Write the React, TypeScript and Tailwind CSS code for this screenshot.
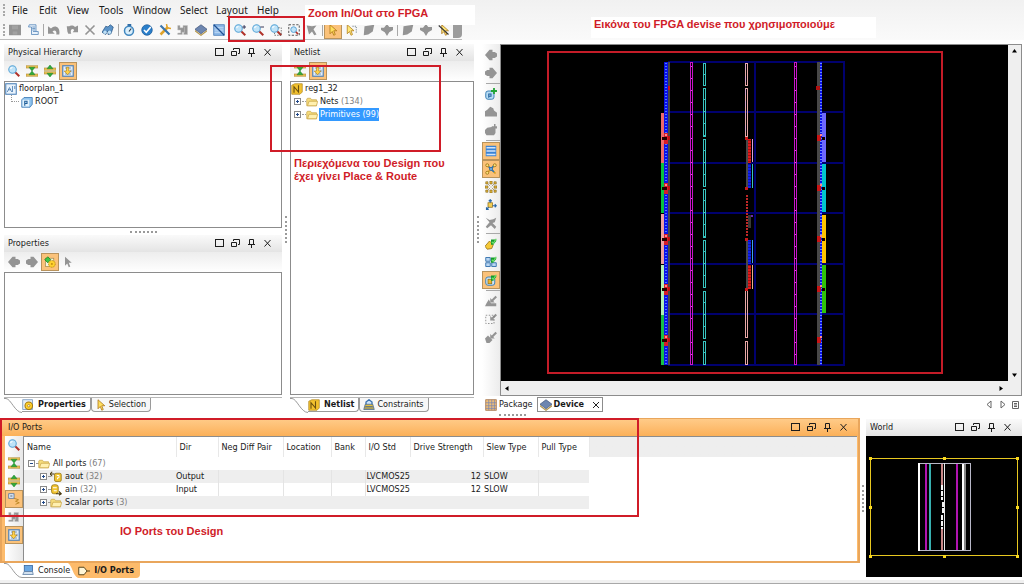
import React from "react";

type IconName =
  | "save" | "script" | "undo" | "redo" | "delete" | "binoculars" | "stopwatch" | "check" | "tools"
  | "schematic" | "chip" | "slash" | "zoom" | "zoomIn" | "zoomOut" | "zoomArea" | "zoomFit" | "unselect"
  | "cursor" | "cursorDots" | "cursorGray" | "leaf" | "diamond" | "crossCursor" | "collapse" | "expand"
  | "pin" | "left" | "right" | "gear" | "pAdd" | "house" | "blobPlus" | "rows" | "network" | "burst"
  | "move" | "swap" | "bell" | "gridCheck" | "cubeCheck" | "grayCheck" | "dashCheck" | "plugCheck"
  | "floorplan" | "cube" | "netlist" | "folder" | "folderOpen" | "cog" | "lock" | "package" | "console"
  | "port" | "portOut" | "portIn" | "treeView";

const G = "#949494";

const lens = (
  <>
    <path d="M9.500 9.500l5.500 5.500" stroke="#b03028" strokeWidth="2.800" />
    <circle cx="6" cy="6" r="5" fill="#bfe3f8" stroke="#5aa5d6" strokeWidth="1.400" />
    <path d="M3.500 5.500a2.500 2.500 0 0 1 2.500-2.200" stroke="#fff" strokeWidth="1.500" fill="none" />
  </>
);
const greenCheck = (
  <>
    <path d="M8 9V2h7v2l-4 5z" fill="#159a2c" />
    <path d="M9 5l2 2 4-6" stroke="#6fe06a" strokeWidth="1.6" fill="none" />
  </>
);
const grayCheck = <path d="M7 4l0 6h6l-2-2 5-5-2-2-5 5z" fill={G} />;
const folderShape = (
  <>
    <path d="M1 13V4l1-1h4l1.500 2H14v8z" fill="#f5dc7c" stroke="#c9a84e" />
    <path d="M2 13l2-6h11.500l-1.500 6z" fill="#fff0b0" stroke="#c9a548" />
  </>
);
const portBody = (
  <>
    <rect x="6" y="3" width="9" height="11" rx="2" fill="#f0c330" stroke="#927012" />
    <path d="M9 6h3v3h-2v2" stroke="#fff" strokeWidth="1.3" fill="none" />
  </>
);

const art: Record<IconName, React.ReactNode> = {
  save: <><path d="M0 1h16v14H0z" fill={G} /><path d="M4 2h8v5H4zM5 10h6v4H5z" fill="#a2a2a2" /></>,
  script: <><path d="M3 1h9v9h3v4H6V4H2z" fill="#e7f1fb" stroke="#4f80b5" /><path d="M7 4h4M7 6h4M7 8h4M8 10h4" stroke="#4f80b5" /></>,
  undo: <path d="M0 3v10h9l-3-3c3-3 6-1 5 4h4C17 4 9 0 4 6z" fill={G} />,
  redo: <path d="M16 2v9H9l2-3c-3-3-6 0-4 5H3C-1 4 7-1 12 4zM1 3h4v8H2z" fill={G} />,
  delete: <path d="M2 2l12 12M14 2L2 14" stroke={G} strokeWidth="2.2" />,
  binoculars: <><path d="M0 11l5-8 3 1 3-3 4 3-3 9-4 1V9l-3 5z" fill="#5b93c8" stroke="#2c5886" /><circle cx="4" cy="11" r="2.200" fill="#bfe0f5" /><circle cx="10" cy="11" r="2.200" fill="#bfe0f5" /></>,
  stopwatch: <><path d="M6 0h5v3H6z" fill="#2f6ba4" /><circle cx="8" cy="9" r="6" fill="#d9eefb" stroke="#3f86bf" strokeWidth="2" /><path d="M8 10l3-4" stroke="#234" strokeWidth="1.4" /></>,
  check: <><circle cx="8" cy="8" r="7" fill="#2a7fcb" stroke="#195a98" /><path d="M4 8l3 3 6-7" stroke="#fff" strokeWidth="2.2" fill="none" /></>,
  tools: <><path d="M2 14L12 4" stroke="#e0a32b" strokeWidth="3.400" /><path d="M2 2l6 6 6 6" stroke="#3b76ae" strokeWidth="3" fill="none" /><path d="M10 0l1 5 5 1" stroke="#e0a32b" strokeWidth="2" fill="none" /></>,
  schematic: <path d="M1 2h3v3h4V2h6v12H9v-3H7v3H1v-2h4V8H1zM10 4v8" fill={G} stroke="#c4c4c4" strokeWidth=".7" />,
  chip: <><path d="M0 7l8-6 8 6-8 6z" fill="#6d86b0" stroke="#46597f" /><path d="M0 8l8 6v2L0 10zM16 8l-8 6v2l8-6z" fill="#b3964e" /></>,
  slash: <><rect x="1" y="1" width="14" height="14" fill="#8db9e8" stroke="#3b72b2" /><path d="M2 5h12M2 8h12M2 11h12" stroke="#d4e7fa" /><path d="M1 1l14 14" stroke="#1e4f90" strokeWidth="1.6" /></>,
  zoom: lens,
  zoomIn: <>{lens}<path d="M11 4h5M13.500 1.500v5" stroke="#335" strokeWidth="1.3" /></>,
  zoomOut: <>{lens}<path d="M11 4h5" stroke="#335" strokeWidth="1.3" /></>,
  zoomArea: <>{lens}<path d="M11 5h4v10H6v-3" stroke="#555" strokeDasharray="2 1.500" fill="none" /></>,
  zoomFit: <><rect x="1" y="1" width="14" height="14" fill="none" stroke="#444" strokeDasharray="3 2" strokeWidth="1.2" /><path d="M9.500 9.500l4 4" stroke="#b03028" strokeWidth="2" /><circle cx="7.500" cy="7.500" r="3.800" fill="#bfe3f8" stroke="#5aa5d6" strokeWidth="1.3" /></>,
  unselect: <path d="M1 2l7 1 6-1-4 5 4 7-3 1-3-5-4 4z" fill={G} />,
  cursor: <path d="M4 1v12l3-3 2 5 2-1-2-5h4z" fill="#ffdf5e" stroke="#a86d10" />,
  cursorDots: <><path d="M3 1v12l3-3 2 5 2-1-2-5h4z" fill="#ffe97a" stroke="#b07a14" /><path d="M10 3h5v10" stroke="#456" strokeDasharray="1.500 1.500" fill="none" /></>,
  cursorGray: <path d="M4 1v12l3-3 2 5 2-1-2-5h4z" fill={G} />,
  leaf: <path d="M1 15l1-12L15 1l-2 9-6 4z" fill={G} />,
  diamond: <path d="M8 0l3 4h5v4l-5 3-3 5-3-5-5-3V5h4z" fill={G} />,
  crossCursor: <><path d="M5 1v12l3-3 2 5 2-1-2-5h4z" fill="#ffe97a" stroke="#a86d10" /><path d="M1 2l13 12" stroke="#333" strokeWidth="1.4" /></>,
  collapse: <><path d="M0 1h16v3H0zM0 12h16v3H0z" fill="#efc95c" stroke="#a8822c" strokeWidth=".8" /><path d="M4 3h8L8 8zM4 13h8L8 8z" fill="#2fae3c" stroke="#157322" strokeWidth=".6" /></>,
  expand: <><path d="M0 4h16v3H0zM0 9h16v3H0z" fill="#efc95c" stroke="#a8822c" strokeWidth=".8" /><path d="M4 5h8L8 0zM4 11h8l-4 5z" fill="#2fae3c" stroke="#157322" strokeWidth=".6" /></>,
  pin: <><rect x="1" y="1" width="14" height="14" fill="#e5eef8" stroke="#5583b5" strokeWidth="1.6" /><path d="M4 4h8M4 12h8M11 7h2M11 9h2" stroke="#5583b5" /><path d="M6 3h3v5h3l-4.500 5L3 8h3z" fill="#ffd24a" stroke="#a87912" strokeWidth=".8" /></>,
  left: <path d="M0 8l6-7h4v3h3l3 2v4l-3 2h-3v3H6z" fill={G} />,
  right: <path d="M16 8l-6-7H6v3H3L0 6v4l3 2h3v3h4z" fill={G} />,
  gear: <><rect x="2" y="3" width="11" height="11" fill="#f5f5e0" stroke="#a38c50" /><path d="M5 1l4 4-4 4-4-4z" fill="#3fc544" stroke="#17801f" /><circle cx="10.500" cy="10.500" r="4.500" fill="#ffd22e" stroke="#ad7d0c" strokeDasharray="2 1" /><circle cx="10.500" cy="10.500" r="1.300" fill="#c08a12" /></>,
  pAdd: <><rect x="1" y="4" width="11" height="11" rx="3" fill="#b6dcf5" stroke="#3c7fb5" strokeWidth="1.300" /><path d="M5 13V8h3v3H5" stroke="#205f9a" strokeWidth="1.400" fill="none" /><path d="M12 0v8M8 4h8" stroke="#21a535" strokeWidth="2.400" /></>,
  house: <path d="M7 1l4 2 1 3 4 3v5H0V7l3-2z" fill={G} />,
  blobPlus: <path d="M3 5l6-1V3h3V0h2v3h2v3h-2v6l-2 3H2l-2-3V8z" fill={G} />,
  rows: <><rect x="1" y="1" width="14" height="14" fill="#3b83d4" /><path d="M2 3.500h12M2 8h12M2 12.500h12" stroke="#cfe4fa" strokeWidth="2" /></>,
  network: <><path d="M2 2l12 12M14 2L2 14" stroke="#d49c1c" strokeWidth="2" /><path d="M5 5l7 7M12 3L8 8" stroke="#2c75b8" strokeWidth="2" /><circle cx="3" cy="3" r="2" fill="#ffe37a" stroke="#946a10" /><circle cx="13" cy="3" r="2" fill="#ffe37a" stroke="#946a10" /><circle cx="3" cy="13" r="2" fill="#ffe37a" stroke="#946a10" /><circle cx="8" cy="8" r="2" fill="#7dbcf0" stroke="#205f9a" /></>,
  burst: <g fill="#e8b93a" stroke="#6d5414" strokeWidth=".7"><path d="M1 1h3v3H1zM6.500 0h3v4h-3zM12 1h3v3h-3zM0 6.500h4v3H0zM12 6.500h4v3h-4zM1 12h3v3H1zM6.500 12h3v4h-3zM12 12h3v3h-3z" /><path d="M4 4l3 3M12 4L9 7M4 12l3-3M12 12L9 9" /></g>,
  move: <><rect x="4" y="5" width="6" height="6" fill="#f4cf55" stroke="#936f16" /><path d="M7 5V1M5 3l2-2 2 2M10 9h5M13 7l2 2-2 2M5 11l-3 3M2 11v3h3" stroke="#2968a8" strokeWidth="1.500" fill="none" /></>,
  swap: <path d="M1 1l5 3 5-1 4-2-2 6-3 1 5 5-2 3-5-5-5 4-2-2 5-6z" fill={G} />,
  bell: <><path d="M0 11l6-7 5 5-2 5-6 1z" fill="#f5c938" stroke="#8d6a10" />{greenCheck}</>,
  gridCheck: <><path d="M1 2h6v5H1zM1 9h6v5H1zM9 9h6v5H9z" fill="#b9d6f2" stroke="#3e77b1" strokeWidth="1.300" />{greenCheck}</>,
  cubeCheck: <><rect x="1" y="4" width="12" height="11" rx="3" fill="#cfe6f8" stroke="#3c7fb5" strokeWidth="1.300" /><rect x="4" y="7" width="5" height="6" fill="#f0b92c" stroke="#8d6a10" />{greenCheck}</>,
  grayCheck: <>{grayCheck}<path d="M0 15l2-4 3-5 3 5h7v4z" fill={G} /></>,
  dashCheck: <>{grayCheck}<rect x="1" y="3" width="11" height="11" fill="none" stroke="#777" strokeDasharray="2 2" /></>,
  plugCheck: <>{grayCheck}<path d="M0 10l4-4 6 6-4 4H2z" fill={G} /></>,
  floorplan: <><rect x="1" y="1" width="14" height="14" fill="#e9f3fc" stroke="#4a7fb7" strokeWidth="1.400" /><path d="M3 12l3-6 3 6M4 9h4M10 4v8M13 4v4" stroke="#3a70aa" fill="none" /></>,
  cube: <><path d="M1 5l3-3h11v9l-3 4H1z" fill="#8fc3ee" stroke="#2f6fae" /><rect x="2" y="5" width="9" height="9" fill="#e2f1fc" /><path d="M5 13V7h3v3H5" stroke="#205f9a" strokeWidth="1.500" fill="none" /></>,
  netlist: <><path d="M1 3l4-2h10v11l-3 3H1z" fill="#f3c22e" stroke="#b08a24" /><path d="M4 13V5l6 7V3" stroke="#6b500e" strokeWidth="1.500" fill="none" /></>,
  folder: folderShape,
  folderOpen: folderShape,
  cog: <><rect x="1" y="1" width="13" height="13" fill="#e5eef8" stroke="#6c8fb8" /><circle cx="9" cy="9" r="5" fill="#ffd22e" stroke="#a3750a" strokeWidth="1.400" /><circle cx="9" cy="9" r="1.600" fill="#fff" stroke="#a3750a" /></>,
  lock: <><path d="M4 8V4l4-3 4 3v4" stroke="#3d73b0" strokeWidth="1.800" fill="#cfe4f8" /><path d="M1 14l2-7h10l2 7z" fill="#e8c23e" stroke="#3d6297" /><path d="M3 10h10M2 12h12" stroke="#3d6297" /></>,
  package: <><rect x="1" y="1" width="14" height="14" fill="#f0c078" stroke="#a06a3c" /><path d="M5 1v14M9 1v14M12.500 1v14M1 5h14M1 9h14M1 12.500h14" stroke="#7a86b0" strokeWidth="1" /></>,
  console: <><rect x="3" y="2" width="11" height="8" fill="#6aa7e2" stroke="#2f5f98" /><path d="M1 14l2-4h11l1 4z" fill="#d2e0ee" stroke="#5a7ba0" /></>,
  port: <path d="M1 3h7l4 5-4 5H1zM12 8h4" fill="#fff6d8" stroke="#55431a" strokeWidth="1.300" />,
  portOut: <>{portBody}<path d="M0 4h6M3 1L0 4l3 3" stroke="#4a3a10" strokeWidth="1.400" fill="none" /></>,
  portIn: <><rect x="2" y="1" width="9" height="12" rx="3" fill="#f0c330" stroke="#927012" /><path d="M4 5h5M5 9h4" stroke="#fff" strokeWidth="1.400" /><path d="M8 13h6M12 10l3 3-3 2" stroke="#4a3a10" strokeWidth="1.500" fill="none" /></>,
  treeView: <><rect x="1" y="1" width="7" height="6" fill="#e5eef8" stroke="#3f69a3" /><path d="M3 4h3" stroke="#234" /><path d="M8 7l6 2-4 2 5 2-5 2" stroke="#b98520" strokeWidth="1.200" fill="none" /></>,
};

function Icon({ name }: { name: IconName }) {
  return (
    <svg viewBox="0 0 16 16" className="size-3 shrink-0" aria-hidden="true">
      {art[name]}
    </svg>
  );
}

function Tool({ name, on = false }: { name: IconName; on?: boolean }) {
  return (
    <button
      type="button"
      aria-label={name}
      aria-pressed={on}
      className={
        on
          ? "flex size-[18px] shrink-0 items-center justify-center border border-[#b9935c] bg-[#fbc27a]"
          : "flex size-[18px] shrink-0 items-center justify-center"
      }
    >
      <Icon name={name} />
    </button>
  );
}

function WindowButtons() {
  const shapes: [string, React.ReactNode][] = [
    ["Maximize", <rect key="a" x="1.500" y="1.500" width="8" height="7" />],
    ["Float", <path key="b" d="M3.500 3V1.500h6v5H8M1.500 4.500h5v4h-5z" />],
    ["Pin", <path key="c" d="M3.500 6V1.500h4V6M2 6.500h7M5.500 6.500V10" />],
    ["Close", <path key="d" d="M2.500 2l6 6.500M8.500 2l-6 6.500" />],
  ];
  return (
    <div className="flex">
      {shapes.map(([label, shape]) => (
        <button key={label} type="button" aria-label={label} className="flex w-4 items-center justify-center">
          <svg viewBox="0 0 11 11" className="size-[11px]" fill="none" stroke="#1c1c1c">
            {shape}
          </svg>
        </button>
      ))}
    </div>
  );
}

function TitleBar({ title, active = false }: { title: string; active?: boolean }) {
  return (
    <header
      className={
        active
          ? "flex h-[17px] shrink-0 items-center justify-between bg-linear-to-b from-[#ffcb88] to-[#fbb058] pr-[7px] pl-1.5"
          : "flex h-[17px] shrink-0 items-center justify-between bg-linear-to-b from-[#fafafa] to-[#e4e4e4] pr-[7px] pl-1"
      }
    >
      <h2>{title}</h2>
      <WindowButtons />
    </header>
  );
}

function Panel({ title, tools, children }: { title: string; tools: React.ReactNode; children?: React.ReactNode }) {
  return (
    <section className="flex min-h-0 flex-1 flex-col">
      <TitleBar title={title} />
      <div className="flex h-5 shrink-0 items-center bg-linear-to-b from-[#ededed] to-white px-px">{tools}</div>
      <div className="flex-1 border border-[#8c8c8c] bg-white">{children}</div>
    </section>
  );
}

function Expander({ open = false }: { open?: boolean }) {
  return (
    <button type="button" aria-label={open ? "Collapse" : "Expand"} className="flex shrink-0 items-center">
      <svg viewBox="0 0 9 9" className="size-[9px]" fill="none">
        <rect x="1.500" y="1.500" width="6" height="6" fill="#fff" stroke="#8a8a8a" />
        <path d={open ? "M3 4.500h3" : "M3 4.500h3M4.500 3v3"} stroke="#234a8a" />
      </svg>
    </button>
  );
}

function Grip({ vertical = false }: { vertical?: boolean }) {
  return vertical ? (
    <div className="h-[27px] border-l-2 border-dotted border-[#9a9a9a]" />
  ) : (
    <div className="w-[27px] border-t-2 border-dotted border-[#9a9a9a]" />
  );
}

type TabKind = "active" | "first" | "plain" | "accent";

const tabClasses: Record<TabKind, string> = {
  active: "flex items-center gap-1 rounded-br-sm border-r border-b border-[#9a9a9a] bg-white pr-1 font-bold",
  first: "flex items-center gap-1 border-b border-[#9a9a9a] bg-white pr-0.5",
  plain: "flex items-center gap-0.5 rounded-b-sm border-x border-b border-[#9a9a9a] bg-[#f7f7f7] pr-1 pl-[3px]",
  accent: "flex items-center gap-1 rounded-br-sm bg-[#fdbb6b] pr-1.5 font-bold",
};

function Tab({ icon, label, kind = "plain" }: { icon: IconName; label: string; kind?: TabKind }) {
  return (
    <button type="button" role="tab" aria-selected={kind === "active" || kind === "accent"} className={tabClasses[kind]}>
      <Icon name={icon} />
      {label}
    </button>
  );
}

function TabSlope() {
  return (
    <svg viewBox="0 0 18 15" className="h-[15px] w-[18px] shrink-0" fill="none">
      <path d="M0 .5h2C7 1 11 14.500 18 14.500" stroke="#9a9a9a" />
    </svg>
  );
}

const gridRows = [62, 112, 163, 213, 264, 314, 365];
const marks = [138, 188, 239, 289, 340];
const cyanSegs = [[63, 86], [88, 137], [139, 187], [189, 238], [240, 288], [291, 339], [341, 365]];
const pinkSegs = [[63, 86], [88, 137], [290, 338], [341, 365]];
const leftBanks: [number, number, string][] = [
  [113, 50, "#ee6a6a"], [163, 50, "#08c240"], [214, 50, "#efa0a0"], [265, 50, "#b2f0b4"], [315, 50, "#18c048"],
];
const rightBanks: [number, number, string][] = [
  [113, 49, "#6d68ff"], [164, 48, "#00c6cf"], [215, 48, "#ffc400"], [265, 48, "#2fc408"],
];

function DeviceView() {
  return (
    <svg viewBox="501 45 507 336" className="absolute inset-0 size-full" shapeRendering="crispEdges" aria-label="Device floorplan">
      <g stroke="#00006e" strokeWidth="2">
        {gridRows.map((y) => <path key={y} d={`M668 ${y}H845`} />)}
        <path d="M755 62V365M844 62V365" />
      </g>
      <rect x="664" y="62" width="4" height="303" fill="#0a12e8" />
      <path d="M666 63V365" stroke="#4d7cff" strokeWidth="2" strokeDasharray="1 2" />
      <rect x="668" y="62" width="2" height="303" fill="#484848" />
      <rect x="817" y="62" width="3" height="303" fill="#484848" />
      <rect x="820" y="62" width="2" height="303" fill="#0a12e8" />
      <path d="M821 63V365" stroke="#6d8cff" strokeWidth="2" strokeDasharray="1 2" />
      {leftBanks.map(([y, h, c]) => <rect key={y} x="661" y={y} width="3" height={h} fill={c} />)}
      {rightBanks.map(([y, h, c]) => <rect key={y} x="822" y={y} width="4" height={h} fill={c} />)}
      <g fill="none" strokeWidth="1">
        {[690, 794].map((x) => (
          <g key={x}>
            <rect x={x + 0.5} y="62.500" width="2" height="302" stroke="#c814c8" />
            <path d={`M${x + 1.5} 66V365`} stroke="#e040e0" strokeDasharray="1 11" />
          </g>
        ))}
        {cyanSegs.map(([a, b]) => (
          <g key={a}>
            <rect x="703.500" y={a + 0.5} width="2" height={b - a - 1} stroke="#38c4c0" />
            <path d={`M704.500 ${a + 11}V${b}`} stroke="#38c4c0" strokeDasharray="1 11" />
          </g>
        ))}
        {pinkSegs.map(([a, b]) => <rect key={a} x="745.500" y={a + 0.5} width="2" height={b - a - 1} stroke="#e8a6a6" />)}
        <path d="M745.500 64V86M745.500 89V136" stroke="#d8a0c8" strokeDasharray="6 6" />
      </g>
      <g>
        <rect x="746" y="139" width="2" height="49" fill="#484848" />
        <rect x="748" y="139" width="3" height="24" fill="#e01818" />
        <rect x="752" y="139" width="1" height="23" fill="#d8a0d8" />
        <rect x="748" y="164" width="3" height="24" fill="#1020f0" />
        <rect x="752" y="164" width="1" height="24" fill="#38c4c0" />
        <path d="M746.500 195V236" stroke="#c02828" strokeWidth="2" strokeDasharray="2 1" />
        <rect x="748" y="215" width="3" height="13" fill="#383838" />
        <rect x="751" y="215" width="2" height="2" fill="#6a2bb0" />
        <rect x="746" y="240" width="2" height="49" fill="#484848" />
        <rect x="748" y="240" width="3" height="24" fill="#1020f0" />
        <rect x="752" y="240" width="1" height="23" fill="#3ca0f0" />
        <rect x="748" y="265" width="3" height="24" fill="#e01818" />
        <rect x="752" y="265" width="1" height="24" fill="#e8b088" />
        <path d="M749.500 140V188M749.500 241V289" stroke="#000" strokeOpacity=".3" strokeWidth="3" strokeDasharray="1 2" />
        {[137, 187, 238, 288].map((y) => <rect key={y} x="745" y={y} width="3" height="3" fill="#c81818" />)}
      </g>
      {marks.map((y) => (
        <g key={y}>
          <rect x="664" y={y - 5} width="4" height="11" fill="#d81c28" />
          <rect x="665" y={y - 4} width="2" height="2" fill="#ff8a8a" />
          <rect x="668" y={y - 2} width="2" height="4" fill="#c01010" />
          <rect x="662" y={y - 1} width="5" height="3" fill="#200" />
          <rect x="817" y={y - 3} width="4" height="6" fill="#c81414" />
          <rect x="820" y={y - 4} width="2" height="2" fill="#ff8a8a" />
          {y < 340 && <rect x="822" y={y - 1} width="3" height="3" fill="#100" />}
        </g>
      ))}
      <rect x="668" y="86" width="2" height="4" fill="#d01010" />
      <rect x="816" y="86" width="4" height="4" fill="#b01010" />
    </svg>
  );
}

function WorldView() {
  return (
    <svg viewBox="866 436 156 141" className="absolute inset-0 size-full" shapeRendering="crispEdges" aria-label="World overview">
      <g fill="none">
        <rect x="918.500" y="463.500" width="52" height="87" stroke="#b8b8c8" />
        <path d="M919 463V551" stroke="#fff" strokeWidth="2" />
        <path d="M926 464V550M957 464V550" stroke="#b014b0" strokeWidth="2" />
        <path d="M930 464V550" stroke="#38b0b0" strokeWidth="2" />
        <path d="M942 464V485M942 529V550" stroke="#c88888" strokeWidth="2" />
        <path d="M942 485V500M943 502V513M942 515V529" stroke="#f4f4f4" strokeWidth="2" strokeDasharray="5 1" />
        <path d="M944.500 463V551" stroke="#e8e8e8" />
        <path d="M963 464V550" stroke="#fff" strokeWidth="2" />
        <path d="M965 464V550" stroke="#888" strokeWidth="2" />
        <rect x="870.500" y="458.500" width="147" height="97" stroke="#e8c820" />
      </g>
      {[870, 944, 1017].map((x) =>
        [458, 507, 556].map((y) =>
          x === 944 && y === 507 ? null : <rect key={`${x}-${y}`} x={x - 1} y={y - 1} width="3" height="3" fill="#f8d820" />,
        ),
      )}
    </svg>
  );
}

const menus = [
  ["File", "w-[27px]"], ["Edit", "w-7"], ["View", "w-8"], ["Tools", "w-[34px]"],
  ["Window", "w-[47px]"], ["Select", "w-9"], ["Layout", "w-[41px]"], ["Help", "w-8"],
];

const toolbar: (IconName | "|")[] = [
  "save", "script", "|", "undo", "redo", "delete", "binoculars", "|", "stopwatch", "check", "tools",
  "schematic", "chip", "slash", "|", "zoomIn", "zoomOut", "zoomArea", "zoomFit", "unselect", "|",
  "cursor", "cursorDots", "leaf", "diamond", "|", "leaf", "diamond", "crossCursor",
];

const deviceTools: ([IconName, boolean] | "|")[] = [
  ["left", false], ["right", false], "|", ["pAdd", false], ["house", false], ["blobPlus", false], "|",
  ["rows", true], ["network", true], ["burst", false], ["move", false], ["swap", false], "|",
  ["bell", false], ["gridCheck", false], ["cubeCheck", true], "|",
  ["grayCheck", false], ["dashCheck", false], ["plugCheck", false],
];

const columns = [
  ["Name", "w-[152px]"], ["Dir", "w-[42px]"], ["Neg Diff Pair", "w-[65px]"], ["Location", "w-12"], ["Bank", "w-[34px]"],
  ["I/O Std", "w-[45px]"], ["Drive Strength", "w-[73px]"], ["Slew Type", "w-[55px]"], ["Pull Type", "w-[51px]"],
];

const ports: { name: string; count: string; icon: IconName; dir?: string; root?: boolean }[] = [
  { name: "All ports", count: "(67)", icon: "folderOpen", root: true },
  { name: "aout", count: "(32)", icon: "portOut", dir: "Output" },
  { name: "ain", count: "(32)", icon: "portIn", dir: "Input" },
  { name: "Scalar ports", count: "(3)", icon: "folder" },
];

export default function App() {
  return (
    <div className="relative flex h-screen flex-col overflow-hidden bg-white font-['DejaVu_Sans_Condensed','Noto_Sans',sans-serif] text-[9px] leading-[13px] whitespace-nowrap text-[#1a1a1a]">
      <div className="shrink-0 bg-linear-to-b from-[#f1f1f1] to-[#fafafa]">
        <nav className="flex h-5 items-center pl-[3px] font-['Noto_Sans',sans-serif] text-[10px]">
          <div className="h-3 w-[9px] border-l-2 border-dotted border-[#a8a8a8]" />
          {menus.map(([m, w]) => (
            <button key={m} type="button" className={`${w} shrink-0 text-left`}>{m}</button>
          ))}
        </nav>
        <div className="flex h-5 items-center">
          <div className="flex h-5 items-center border-b border-[#bdbdbd]">
            <div className="ml-[3px] h-3 w-[3px] border-l-2 border-dotted border-[#a8a8a8]" />
            {toolbar.map((t, i) =>
              t === "|" ? <div key={i} className="mx-px h-3 w-px bg-[#a8a8a8]" /> : <Tool key={i} name={t} on={t === "cursor"} />,
            )}
            <div className="h-4 w-[9px] rounded-br bg-[#9c9c9c]" />
          </div>
        </div>
      </div>

      <div className="flex min-h-0 flex-1 pt-1 pl-1">
        <div className="flex w-[278px] shrink-0 flex-col">
          <Panel title="Physical Hierarchy" tools={<><Tool name="zoom" /><Tool name="collapse" /><Tool name="expand" /><Tool name="pin" on /></>}>
            <ul>
              <li>
                <div className="flex items-center gap-0.5"><Icon name="floorplan" />floorplan_1</div>
                <ul>
                  <li className="flex items-center gap-0.5 pl-1.5">
                    <span className="-mt-1.5 h-[7px] w-2 border-b border-l border-dotted border-[#999]" />
                    <Icon name="cube" />ROOT
                  </li>
                </ul>
              </li>
            </ul>
          </Panel>
          <div className="flex h-[7px] shrink-0 items-center justify-center"><Grip /></div>
          <div className="flex h-40 shrink-0 flex-col">
            <Panel title="Properties" tools={<><Tool name="left" /><Tool name="right" /><Tool name="gear" on /><Tool name="cursorGray" /></>} />
          </div>
          <div role="tablist" className="mt-0.5 mb-0.5 flex h-[15px] shrink-0 border-t border-[#b8b8b8]">
            <TabSlope />
            <Tab icon="cog" label="Properties" kind="active" />
            <Tab icon="cursor" label="Selection" />
          </div>
        </div>

        <div className="flex w-2 shrink-0 items-center justify-center"><Grip vertical /></div>

        <div className="flex w-[184px] shrink-0 flex-col">
          <Panel title="Netlist" tools={<><Tool name="collapse" /><Tool name="pin" on /></>}>
            <ul>
              <li>
                <div className="flex items-center gap-0.5"><Icon name="netlist" />reg1_32</div>
                <ul>
                  <li className="flex items-center pl-0.5">
                    <Expander /><span className="w-1 border-t border-dotted border-[#999]" /><Icon name="folder" />
                    <span className="pl-0.5">Nets <span className="text-[#808080]">(134)</span></span>
                  </li>
                  <li className="flex items-center pl-0.5">
                    <Expander /><span className="w-1 border-t border-dotted border-[#999]" /><Icon name="folder" />
                    <span className="ml-px bg-[#3399ff] pl-px text-white">Primitives (99)</span>
                  </li>
                </ul>
              </li>
            </ul>
          </Panel>
          <div role="tablist" className="mt-0.5 mb-0.5 flex h-[15px] shrink-0 border-t border-[#b8b8b8]">
            <TabSlope />
            <Tab icon="netlist" label="Netlist" kind="active" />
            <Tab icon="lock" label="Constraints" />
          </div>
        </div>

        <div className="flex w-2 shrink-0 items-center justify-center"><Grip vertical /></div>

        <div className="flex min-w-0 flex-1 flex-col">
          <div className="flex min-h-0 flex-1">
            <div className="flex w-[18px] shrink-0 flex-col bg-linear-to-r from-white to-[#ececec] pt-0.5">
              {deviceTools.map((t, i) =>
                t === "|" ? <div key={i} className="my-px ml-1 h-px bg-[#a8a8a8]" /> : <Tool key={i} name={t[0]} on={t[1]} />,
              )}
            </div>
            <div className="mr-0.5 flex min-w-0 flex-1 flex-col border border-[#8c8c8c] bg-[#efefef]">
              <div className="flex min-h-0 flex-1">
                <div className="relative flex-1 bg-black">
                  <DeviceView />
                  <div className="absolute top-1.5 right-[65px] bottom-[7px] left-[46px] border-2 border-[#c41c28]" />
                </div>
                <div className="flex w-[13px] flex-col items-center justify-between py-1">
                  <button type="button" aria-label="Scroll up"><svg viewBox="0 0 5 4" className="h-1 w-[5px]"><path d="M0 3.500L2.500 0 5 3.500z" /></svg></button>
                  <button type="button" aria-label="Scroll down"><svg viewBox="0 0 5 4" className="h-1 w-[5px]"><path d="M0 .5L2.500 4 5 .5z" /></svg></button>
                </div>
              </div>
              <div className="flex h-[14px] shrink-0 items-center justify-between pr-[18px] pl-1">
                <button type="button" aria-label="Scroll left"><svg viewBox="0 0 4 5" className="h-[5px] w-1"><path d="M3.500 0L0 2.500 3.500 5z" /></svg></button>
                <button type="button" aria-label="Scroll right"><svg viewBox="0 0 4 5" className="h-[5px] w-1"><path d="M.5 0L4 2.500 .5 5z" /></svg></button>
              </div>
            </div>
          </div>
          <div className="mb-px flex h-[17px] shrink-0 items-center pl-[3px]">
            <div role="tablist" className="flex h-[15px] gap-1">
              <button type="button" role="tab" aria-selected="false" className="flex items-center gap-0.5"><Icon name="package" />Package</button>
              <div className="flex items-center gap-2 border border-[#8c8c8c] px-0.5">
                <button type="button" role="tab" aria-selected="true" className="flex items-center gap-0.5 font-bold"><Icon name="chip" />Device</button>
                <button type="button" aria-label="Close Device">
                  <svg viewBox="0 0 8 8" className="size-2" stroke="#222"><path d="M1 1l6 6M7 1L1 7" /></svg>
                </button>
              </div>
            </div>
            <div className="ml-auto flex gap-1 pr-1">
              {["M6 1v7L2 4.500z", "M3 1v7l4-3.500z", "M1.500 1.500h6v7h-6zM3 3.500h3M3 5h3M3 6.500h3"].map((d) => (
                <button key={d} type="button" aria-label="Tab navigation">
                  <svg viewBox="0 0 9 9" className="size-[9px]" fill="none" stroke="#666"><path d={d} /></svg>
                </button>
              ))}
            </div>
          </div>
        </div>
      </div>

      <div className="flex h-1 shrink-0 justify-center"><Grip /></div>

      <div className="flex h-40 shrink-0">
        <div className="flex min-w-0 flex-1 flex-col">
          <section className="flex min-h-0 flex-1 flex-col border-x-2 border-t border-b-2 border-[#e9a65c] bg-[#fdbb6b]">
            <TitleBar title="I/O Ports" active />
            <div className="flex min-h-0 flex-1 pr-px pl-[3px]">
              <div className="flex w-[18px] shrink-0 flex-col bg-linear-to-r from-white to-[#e8e8e8]">
                <Tool name="zoom" /><Tool name="collapse" /><Tool name="expand" /><Tool name="treeView" on /><Tool name="schematic" /><Tool name="pin" on />
              </div>
              <div className="min-w-0 flex-1 border-t border-l border-[#8c8c8c] bg-white">
                <div className="bg-linear-to-b from-[#eeeeee] from-[20px] to-white to-[20px]">
                  <table className="w-[565px] table-fixed border-collapse bg-white">
                    <thead>
                      <tr className="h-5">
                        {columns.map(([c, w]) => (
                          <th key={c} scope="col" className={`${w} border-r border-[#e8e8e8] p-0 pl-[3px] text-left font-normal`}>{c}</th>
                        ))}
                      </tr>
                    </thead>
                    <tbody>
                      {ports.map((p) => (
                        <tr key={p.name} className="h-[13px] odd:bg-white even:bg-[#eeeeee]">
                          <td className="p-0">
                            <div className={p.root ? "flex items-center pl-[3px]" : "flex items-center pl-[15px]"}>
                              <Expander open={p.root} />
                              <span className="w-0.5 border-t border-dotted border-[#999]" />
                              <Icon name={p.icon} />
                              <span className="pl-[3px]">{p.name} <span className="text-[#808080]">{p.count}</span></span>
                            </div>
                          </td>
                          <td className="p-0">{p.dir}</td>
                          <td className={p.dir ? "border-x border-[#e4e4e4] p-0" : "p-0"} />
                          <td className={p.dir ? "border-x border-[#e4e4e4] p-0" : "p-0"} />
                          <td className={p.dir ? "border-x border-[#e4e4e4] p-0" : "p-0"} />
                          <td className="p-0 pl-px">{p.dir && "LVCMOS25"}</td>
                          <td className="p-0 pr-0.5 text-right">{p.dir && "12"}</td>
                          <td className="p-0 pl-px">{p.dir && "SLOW"}</td>
                          <td className={p.dir ? "border-l border-[#e4e4e4] p-0" : "p-0"} />
                        </tr>
                      ))}
                    </tbody>
                  </table>
                </div>
              </div>
            </div>
          </section>
          <div role="tablist" className="flex h-[15px] shrink-0 pl-1">
            <TabSlope />
            <Tab icon="console" label="Console" kind="first" />
            <svg viewBox="0 0 10 15" className="-ml-1 h-[15px] w-2.5 shrink-0" fill="#fdbb6b" preserveAspectRatio="none">
              <path d="M0 0c4 2 5 13 10 15V0z" />
            </svg>
            <Tab icon="port" label="I/O Ports" kind="accent" />
          </div>
        </div>
        <div className="flex w-1.5 shrink-0 items-center justify-center"><Grip vertical /></div>
        <section className="mr-0.5 mb-px flex w-[156px] shrink-0 flex-col pt-px">
          <TitleBar title="World" />
          <div className="relative flex-1 bg-black"><WorldView /></div>
        </section>
      </div>
      <div className="flex h-[7px] shrink-0 flex-col pt-0.5 pb-px">
        <div className="flex-1 border-b border-[#a8a8a8] bg-[#f0f0f0]" />
      </div>

      <div className="pointer-events-none absolute inset-0 font-['Liberation_Sans',sans-serif] text-[11px] font-bold text-[#d01c28]">
        <div className="absolute top-4 left-[228px] h-[26px] w-[77px] border-2 border-[#d01c28]" />
        <p className="absolute top-[5px] left-[305px] h-5 w-[170px] bg-white pt-0.5 pl-[3px]">Zoom In/Out στο FPGA</p>
        <p className="absolute top-[17px] left-[591px] h-[21px] w-[285px] bg-white pt-px pl-[3px]">Εικόνα του FPGA devise που χρησιμοποιούμε</p>
        <div className="absolute top-[65px] left-[270px] h-[87px] w-[171px] border-2 border-[#d01c28]" />
        <p className="absolute top-[157px] left-[294px]">Περιεχόμενα του Design που<br />έχει γίνει Place &amp; Route</p>
        <div className="absolute top-[418px] left-0 h-[99px] w-[639px] border-2 border-[#d01c28]" />
        <p className="absolute top-[525px] left-[120px]">IO Ports του Design</p>
      </div>
    </div>
  );
}
